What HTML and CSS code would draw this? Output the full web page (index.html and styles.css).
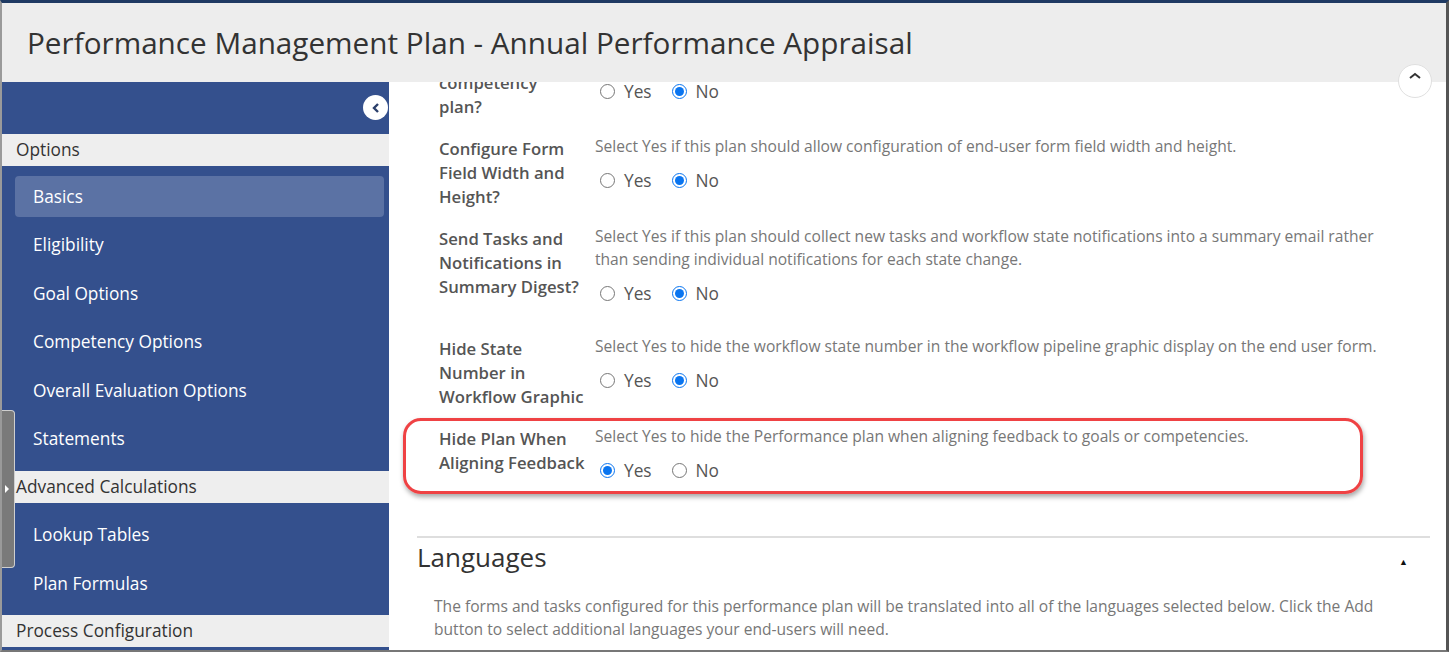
FILE: index.html
```html
<!DOCTYPE html>
<html lang="en">
<head>
  <meta charset="UTF-8" />
  <title>Performance Management Plan - Annual Performance Appraisal</title>
  <link rel="stylesheet" href="styles.css">
</head>
<body>
  <div class="frame">
    <header class="page-header">
      <h1 class="page-title">Performance Management Plan - Annual Performance Appraisal</h1>
    </header>

    <button class="collapse-top" aria-label="Collapse">
      <svg width="14" height="9" viewBox="0 0 14 9"><path d="M2 7 L7 3 L12 7" fill="none" stroke="#333" stroke-width="2"/></svg>
    </button>

    <div class="layout">
      <nav class="sidebar">
        <div class="sidebar-top">
          <button class="sidebar-toggle" aria-label="Hide menu">
            <svg width="10" height="12" viewBox="0 0 10 12"><path d="M7 2 L3 6 L7 10" fill="none" stroke="#2b3f6b" stroke-width="2.4"/></svg>
          </button>
        </div>

        <div class="nav-section">Options</div>
        <ul class="nav-list">
          <li class="nav-item active">Basics</li>
          <li class="nav-item">Eligibility</li>
          <li class="nav-item">Goal Options</li>
          <li class="nav-item">Competency Options</li>
          <li class="nav-item">Overall Evaluation Options</li>
          <li class="nav-item">Statements</li>
        </ul>

        <div class="nav-section">Advanced Calculations</div>
        <ul class="nav-list short">
          <li class="nav-item">Lookup Tables</li>
          <li class="nav-item">Plan Formulas</li>
        </ul>

        <div class="nav-section">Process Configuration</div>
      </nav>

      <div class="side-handle"><span class="handle-arrow"></span></div>

      <main class="content">
        <div class="settings">
          <!-- first row is scrolled partly under the header -->
          <div class="setting first">
            <div class="setting-label">competency<br>plan?</div>
            <div class="setting-body">
              <div class="radios">
                <label class="radio"><input type="radio" name="r1"> Yes</label>
                <label class="radio"><input type="radio" name="r1" checked> No</label>
              </div>
            </div>
          </div>

          <div class="setting">
            <div class="setting-label">Configure Form<br>Field Width and<br>Height?</div>
            <div class="setting-body">
              <p class="setting-desc">Select Yes if this plan should allow configuration of end-user form field width and height.</p>
              <div class="radios">
                <label class="radio"><input type="radio" name="r2"> Yes</label>
                <label class="radio"><input type="radio" name="r2" checked> No</label>
              </div>
            </div>
          </div>

          <div class="setting">
            <div class="setting-label">Send Tasks and<br>Notifications in<br>Summary Digest?</div>
            <div class="setting-body">
              <p class="setting-desc">Select Yes if this plan should collect new tasks and workflow state notifications into a summary email rather than sending individual notifications for each state change.</p>
              <div class="radios">
                <label class="radio"><input type="radio" name="r3"> Yes</label>
                <label class="radio"><input type="radio" name="r3" checked> No</label>
              </div>
            </div>
          </div>

          <div class="setting">
            <div class="setting-label">Hide State<br>Number in<br>Workflow Graphic</div>
            <div class="setting-body">
              <p class="setting-desc">Select Yes to hide the workflow state number in the workflow pipeline graphic display on the end user form.</p>
              <div class="radios">
                <label class="radio"><input type="radio" name="r4"> Yes</label>
                <label class="radio"><input type="radio" name="r4" checked> No</label>
              </div>
            </div>
          </div>

          <div class="setting highlighted">
            <div class="setting-label">Hide Plan When<br>Aligning Feedback</div>
            <div class="setting-body">
              <p class="setting-desc">Select Yes to hide the Performance plan when aligning feedback to goals or competencies.</p>
              <div class="radios">
                <label class="radio"><input type="radio" name="r5" checked> Yes</label>
                <label class="radio"><input type="radio" name="r5"> No</label>
              </div>
            </div>
          </div>
        </div>

        <section class="languages">
          <div class="section-head">
            <h2 class="section-title">Languages</h2>
            <span class="section-caret">&#9650;</span>
          </div>
          <p class="section-text">The forms and tasks configured for this performance plan will be translated into all of the languages selected below. Click the Add button to select additional languages your end-users will need.</p>
        </section>
      </main>
    </div>
  </div>
</body>
</html>
```

FILE: styles.css
```css
html, body {
  margin: 0;
  padding: 0;
  height: 100%;
  overflow: hidden;
  background-color: #ffffff;
}

body {
  font-family: 'Open Sans', 'Liberation Sans', sans-serif;
  color: #333;
}

.frame {
  position: relative;
  box-sizing: border-box;
  width: 1449px;
  height: 652px;
  border-top: 3px solid #1f3a63;
  border-left: 2px solid #9a9a9a;
  border-right: 3px solid #555;
  border-bottom: 2px solid #777;
  display: flex;
  flex-direction: column;
  overflow: hidden;
}

.page-header {
  height: 79px;
  flex-shrink: 0;
  background-color: #ededed;
  display: flex;
  align-items: center;
  position: relative;
  z-index: 2;
}

.page-title {
  margin: 0 0 0 25px;
  font-size: 29.7px;
  font-weight: 400;
  color: #333;
}

.collapse-top {
  position: absolute;
  top: 61px;
  left: 1396px;
  width: 34px;
  height: 34px;
  padding: 0;
  border: 1px solid #e0e0e0;
  border-radius: 50%;
  background-color: #fff;
  display: flex;
  justify-content: center;
  align-items: flex-start;
  padding-top: 6px;
  box-sizing: border-box;
  z-index: 3;
}

.layout {
  flex: 1;
  display: flex;
  min-height: 0;
  position: relative;
}

/* sidebar */

.sidebar {
  width: 387px;
  flex-shrink: 0;
  background-color: #34508d;
  overflow: hidden;
}

.sidebar-top {
  height: 52px;
  display: flex;
  align-items: center;
  justify-content: flex-end;
  padding-right: 1px;
}

.sidebar-toggle {
  width: 25px;
  height: 25px;
  border: none;
  border-radius: 50%;
  background-color: #fff;
  padding: 0;
  display: flex;
  align-items: center;
  justify-content: center;
  margin-top: -1px;
}

.nav-section {
  height: 32px;
  line-height: 32px;
  background-color: #eeeeee;
  padding-left: 14px;
  font-size: 17.3px;
  color: #333;
}

.nav-list {
  list-style: none;
  margin: 0;
  padding: 10px 5px 5px 13px;
}

.nav-list.short {
  padding-top: 11px;
  padding-bottom: 4px;
}

.nav-item {
  height: 41px;
  line-height: 41px;
  margin-bottom: 7.4px;
  padding-left: 18px;
  border-radius: 4px;
  font-size: 17.3px;
  color: #fff;
}

.nav-item.active {
  background-color: #5b72a4;
}

.side-handle {
  position: absolute;
  left: -2px;
  top: 328px;
  width: 15px;
  height: 158px;
  background-color: #7a7a7a;
  border: 1px solid #cfcfcf;
  border-left: none;
  border-radius: 0 4px 4px 0;
  box-sizing: border-box;
}

.handle-arrow {
  position: absolute;
  left: 5px;
  top: 74px;
  width: 0;
  height: 0;
  border-top: 4px solid transparent;
  border-bottom: 4px solid transparent;
  border-left: 4px solid #fff;
}

/* content */

.content {
  flex: 1;
  overflow: hidden;
  background-color: #fff;
}

.settings {
  padding: 0 56px 0 50px;
}

.setting {
  display: flex;
  position: relative;
}

.setting-label {
  width: 156px;
  flex-shrink: 0;
  padding: 2px 0 16px;
  font-size: 16.7px;
  font-weight: 600;
  line-height: 24px;
  color: #555;
}

.setting.first .setting-label {
  margin-top: -13px;
}

.setting-body {
  flex: 1;
  padding-bottom: 30px;
}

.setting-desc {
  margin: 0;
  font-size: 15.6px;
  line-height: 23px;
  color: #777;
}

.radios {
  display: flex;
  gap: 20px;
  margin-top: 10px;
  height: 24px;
  padding-left: 5px;
}

.setting.first .radios {
  margin-top: 0;
  height: 18px;
}

.radio {
  display: flex;
  align-items: center;
  gap: 9px;
  font-size: 17.3px;
  color: #555;
}

.radio input {
  width: 15px;
  height: 15px;
  margin: 0;
  accent-color: #0a75f0;
}

.setting.highlighted::after {
  content: "";
  position: absolute;
  left: -36px;
  top: -7px;
  width: 960px;
  height: 76px;
  border: 3px solid #ef4244;
  border-radius: 18px;
  box-sizing: border-box;
  box-shadow: 1px 3px 5px rgba(0, 0, 0, 0.35);
}

.languages {
  margin: 24px 16px 0 28px;
  border-top: 2px solid #dedede;
}

.section-head {
  display: flex;
  align-items: center;
  justify-content: space-between;
  height: 40px;
  margin-top: -1px;
}

.section-title {
  margin: 0;
  font-size: 26px;
  font-weight: 400;
  color: #333;
}

.section-caret {
  font-size: 9px;
  color: #111;
  margin-right: 22px;
  margin-top: 8px;
}

.section-text {
  margin: 18px 28px 0 17px;
  font-size: 15.6px;
  line-height: 23px;
  color: #777;
}
```
